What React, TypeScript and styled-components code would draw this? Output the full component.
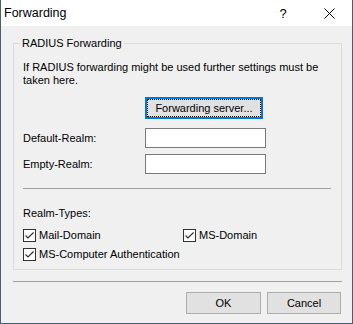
import styled, { createGlobalStyle } from 'styled-components';

const GlobalStyle = createGlobalStyle`
  html, body {
    margin: 0;
    padding: 0;
    background: #ffffff;
  }
  body {
    font-family: "Liberation Sans", Arial, sans-serif;
    font-size: 11px;
    color: #000000;
  }
`;

const Window = styled.div`
  box-sizing: border-box;
  width: 353px;
  height: 324px;
  display: flex;
  flex-direction: column;
  border: 1px solid #435f7c;
  border-top: none;
  background: #f0f0f0;
`;

const TitleBar = styled.div`
  height: 26px;
  flex: none;
  display: flex;
  align-items: center;
  background: #ffffff;
  padding-left: 3px;
`;

const Title = styled.div`
  flex: 1;
  font-size: 12.5px;
  line-height: 16px;
`;

const CaptionButton = styled.div<{ $width: number }>`
  width: ${({ $width }) => $width}px;
  height: 26px;
  display: flex;
  align-items: center;
  justify-content: center;
  font-size: 13px;
`;

const Body = styled.div`
  flex: 1;
  display: flex;
  flex-direction: column;
  padding: 10px 10px 0 12px;
`;

const Group = styled.fieldset`
  margin: 0;
  padding: 11px 10px 0 9px;
  min-width: 0;
  height: 234px;
  box-sizing: border-box;
  border: 1px solid #dcdcdc;
  display: flex;
  flex-direction: column;
`;

const Legend = styled.legend`
  padding: 0 2px;
  margin-left: -3px;
  line-height: 14px;
`;

const Info = styled.p`
  margin: 0;
  line-height: 13px;
  white-space: nowrap;
`;

const ButtonRow = styled.div`
  display: flex;
  padding-left: 122px;
  margin-top: 10px;
`;

const Button = styled.button<{ $focused?: boolean; $width: number }>`
  box-sizing: border-box;
  width: ${({ $width }) => $width}px;
  height: 22px;
  margin: 0;
  padding: 0;
  font-family: inherit;
  font-size: 11px;
  color: #000000;
  background: #e1e1e1;
  border: ${({ $focused }) => ($focused ? '2px solid #0078d7' : '1px solid #adadad')};
  display: flex;
  align-items: center;
  justify-content: center;
`;

const FocusRect = styled.span`
  box-sizing: border-box;
  width: 100%;
  height: 100%;
  display: flex;
  align-items: center;
  justify-content: center;
  border: 1px dotted #000000;
`;

const FieldRow = styled.div<{ $gap: number }>`
  display: flex;
  align-items: center;
  margin-top: ${({ $gap }) => $gap}px;
`;

const FieldLabel = styled.label`
  width: 122px;
`;

const TextBox = styled.input`
  box-sizing: border-box;
  width: 121px;
  height: 20px;
  margin: 0;
  border: 1px solid #7a7a7a;
  background: #ffffff;
  outline: none;
`;

const Divider = styled.div<{ $top: number }>`
  height: 1px;
  flex: none;
  background: #a0a0a0;
  margin-top: ${({ $top }) => $top}px;
`;

const SectionLabel = styled.div`
  margin-top: 17px;
  line-height: 14px;
`;

const CheckGrid = styled.div`
  display: grid;
  grid-template-columns: 160px auto;
  row-gap: 6px;
  margin-top: 9px;
`;

const CheckItem = styled.div<{ $span?: boolean }>`
  display: flex;
  align-items: center;
  gap: 3px;
  line-height: 13px;
  grid-column: ${({ $span }) => ($span ? '1 / span 2' : 'auto')};
`;

const Box = styled.span`
  box-sizing: border-box;
  width: 13px;
  height: 13px;
  border: 1px solid #333333;
  background: #ffffff;
  display: flex;
  align-items: center;
  justify-content: center;
`;

const Footer = styled.div`
  flex: 1;
  display: flex;
  flex-direction: column;
`;

const FooterButtons = styled.div`
  display: flex;
  justify-content: flex-end;
  gap: 6px;
  margin-top: 10px;
  padding-right: 1px;
`;

const Check = ({ label, span }: { label: string; span?: boolean }) => (
  <CheckItem $span={span}>
    <Box>
      <svg width="11" height="11" viewBox="0 0 11 11">
        <path d="M1.5 5.5 L4 8 L9.5 2.5" fill="none" stroke="#333333" strokeWidth="1.2" />
      </svg>
    </Box>
    {label}
  </CheckItem>
);

export default function App() {
  return (
    <>
      <GlobalStyle />
      <Window>
        <TitleBar>
          <Title>Forwarding</Title>
          <CaptionButton $width={46}>?</CaptionButton>
          <CaptionButton $width={46}>
            <svg width="11" height="11" viewBox="0 0 11 11">
              <path d="M0.5 0.5 L10.5 10.5 M10.5 0.5 L0.5 10.5" stroke="#000000" strokeWidth="1" />
            </svg>
          </CaptionButton>
        </TitleBar>
        <Body>
          <Group>
            <Legend>RADIUS Forwarding</Legend>
            <Info>
              If RADIUS forwarding might be used further settings must be
              <br />
              taken here.
            </Info>
            <ButtonRow>
              <Button $focused $width={118}>
                <FocusRect>Forwarding server...</FocusRect>
              </Button>
            </ButtonRow>
            <FieldRow $gap={9}>
              <FieldLabel>Default-Realm:</FieldLabel>
              <TextBox />
            </FieldRow>
            <FieldRow $gap={6}>
              <FieldLabel>Empty-Realm:</FieldLabel>
              <TextBox />
            </FieldRow>
            <Divider $top={14} />
            <SectionLabel>Realm-Types:</SectionLabel>
            <CheckGrid>
              <Check label="Mail-Domain" />
              <Check label="MS-Domain" />
              <Check label="MS-Computer Authentication" span />
            </CheckGrid>
          </Group>
          <Footer>
            <Divider $top={11} />
            <FooterButtons>
              <Button $width={75}>OK</Button>
              <Button $width={74}>Cancel</Button>
            </FooterButtons>
          </Footer>
        </Body>
      </Window>
    </>
  );
}
